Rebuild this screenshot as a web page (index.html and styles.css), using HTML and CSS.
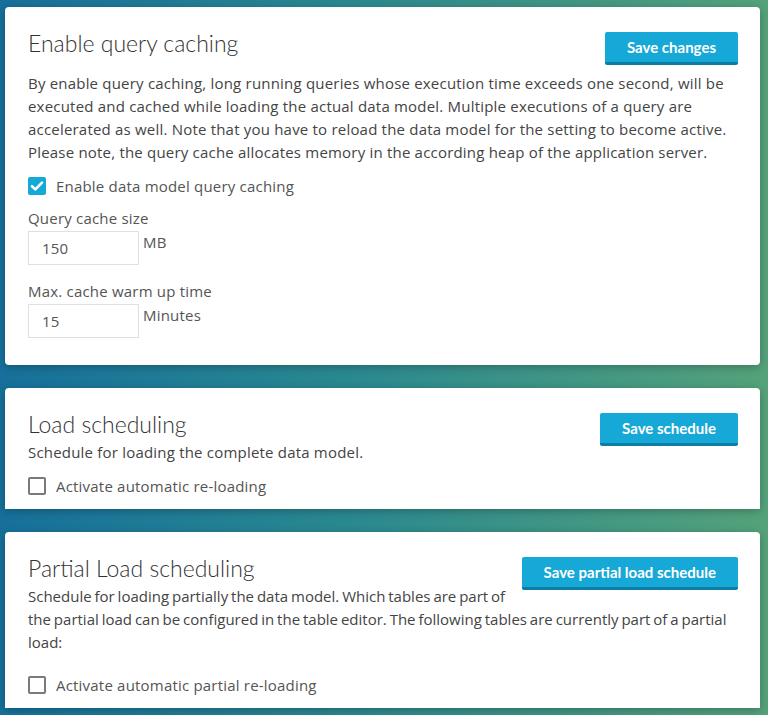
FILE: index.html
```html
<!DOCTYPE html>
<html lang="en">
<head>
<meta charset="utf-8">
<title>Data model settings</title>
<link rel="stylesheet" href="styles.css">
</head>
<body>
<div class="page">
  <section class="card card-first">
    <button class="btn">Save changes</button>
    <h2 class="card-title">Enable query caching</h2>
    <p class="card-text card-text-spaced">By enable query caching, long running queries whose execution time exceeds one second, will be executed and cached while loading the actual data model. Multiple executions of a query are accelerated as well. Note that you have to reload the data model for the setting to become active. Please note, the query cache allocates memory in the according heap of the application server.</p>
    <label class="check-row">
      <span class="checkbox checked">
        <svg viewBox="0 0 18 18" width="18" height="18"><path d="M4 9.2l3.3 3.2L14 5.6" fill="none" stroke="#fff" stroke-width="2.6" stroke-linecap="round" stroke-linejoin="round"/></svg>
      </span>
      <span class="check-label">Enable data model query caching</span>
    </label>
    <div class="field">
      <div class="field-label">Query cache size</div>
      <div class="field-row">
        <div class="input">150</div>
        <span class="unit">MB</span>
      </div>
    </div>
    <div class="field field-second">
      <div class="field-label">Max. cache warm up time</div>
      <div class="field-row">
        <div class="input">15</div>
        <span class="unit">Minutes</span>
      </div>
    </div>
  </section>

  <section class="card card-cut">
    <button class="btn">Save schedule</button>
    <h2 class="card-title">Load scheduling</h2>
    <p class="card-text">Schedule for loading the complete data model.</p>
    <label class="check-row">
      <span class="checkbox"></span>
      <span class="check-label">Activate automatic re-loading</span>
    </label>
  </section>

  <section class="card card-cut">
    <button class="btn">Save partial load schedule</button>
    <h2 class="card-title">Partial Load scheduling</h2>
    <p class="card-text card-text-tight">Schedule for loading partially the data model. Which tables are part of the partial load can be configured in the table editor. The following tables are currently part of a partial load:</p>
    <label class="check-row check-row-far">
      <span class="checkbox"></span>
      <span class="check-label">Activate automatic partial re-loading</span>
    </label>
  </section>
</div>
</body>
</html>
```

FILE: styles.css
```css
html {
  min-height: 100%;
  background: linear-gradient(90deg, #16709b 0%, #2a8890 45%, #54a27a 100%);
}

body {
  margin: 0;
  padding: 7px 8px 7px 5px;
  font-family: "Open Sans", Lato, sans-serif;
  color: #444;
  font-size: 15px;
  letter-spacing: 0.2px;
}

.page {
  display: flex;
  flex-direction: column;
  gap: 23px;
}

.card {
  background: #fff;
  border-radius: 4px;
  padding: 20px 22px 27px 23px;
  box-shadow: 0 2px 8px rgba(0, 0, 0, 0.25);
}

.card-cut {
  border-radius: 4px 4px 0 0;
  padding-bottom: 12px;
}

.card-title {
  margin: 0;
  font-family: Lato, sans-serif;
  font-size: 23px;
  font-weight: 300;
  letter-spacing: 0;
  line-height: 33px;
  color: #333;
}

.btn {
  float: right;
  margin: 5px 0 0 0;
  height: 33px;
  padding: 0 22px;
  border: 0;
  border-bottom: 3px solid #0b7ea3;
  border-radius: 2px;
  background: #16a8d6;
  color: #fff;
  font-family: Lato, "Open Sans", sans-serif;
  font-weight: 700;
  font-size: 15px;
  letter-spacing: 0;
  line-height: 30px;
  cursor: pointer;
}

.card-text {
  margin: 0;
  line-height: 23px;
}

.card-text-spaced {
  margin-top: 12px;
}

.card-text-tight {
  letter-spacing: 0;
  word-spacing: -1px;
}

.check-row {
  display: flex;
  align-items: center;
  gap: 10px;
  margin-top: 11px;
  line-height: 22px;
}

.check-row-far {
  margin-top: 20px;
}

.checkbox {
  width: 18px;
  height: 18px;
  box-sizing: border-box;
  border: 2px solid #7a7a7a;
  border-radius: 2px;
  display: inline-flex;
  align-items: center;
  justify-content: center;
  flex: none;
}

.checkbox.checked {
  border: 0;
  background: #16a8d6;
}

.check-label {
  color: #555;
}

.field {
  margin-top: 10px;
}

.field-second {
  margin-top: 15px;
}

.field-label {
  line-height: 23px;
  color: #555;
}

.field-row {
  display: flex;
  align-items: flex-start;
  gap: 4px;
  margin-top: 1px;
}

.input {
  width: 111px;
  height: 34px;
  box-sizing: border-box;
  border: 1px solid #e0e0e0;
  padding: 0 13px;
  line-height: 32px;
  color: #555;
}

.unit {
  line-height: 23px;
  color: #555;
}
```
